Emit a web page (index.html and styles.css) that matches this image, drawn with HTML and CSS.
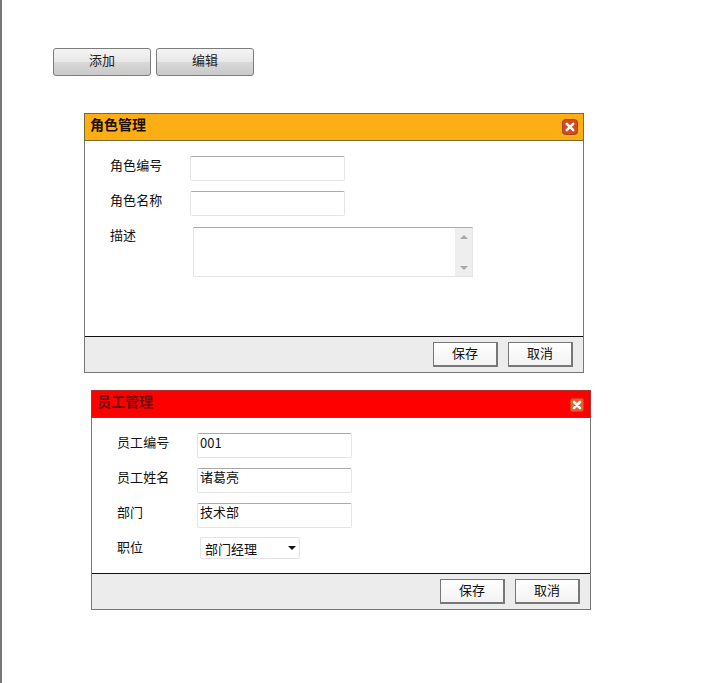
FILE: index.html
```html
<!DOCTYPE html>
<html lang="zh">
<head>
<meta charset="utf-8">
<title>角色管理</title>
<link rel="stylesheet" href="styles.css">
</head>
<body>
<main class="page">
  <div class="toolbar">
    <button class="tool-btn" type="button">添加</button>
    <button class="tool-btn" type="button">编辑</button>
  </div>

  <section class="dialog dialog-role">
    <header class="dialog-head head-orange">
      <h2 class="dialog-title">角色管理</h2>
      <span class="close" aria-label="关闭">
        <svg viewBox="0 0 16 16" width="16" height="16"><rect x="0.5" y="0.5" width="15" height="15" rx="3" fill="#d4491d" stroke="#a5411c"/><path d="M4.800 4.800l6.400 6.400M11.200 4.800l-6.400 6.400" stroke="#fff" stroke-width="2.600" stroke-linecap="round"/></svg>
      </span>
    </header>
    <div class="dialog-body">
      <div class="row"><span class="label">角色编号</span><span class="input"></span></div>
      <div class="row"><span class="label">角色名称</span><span class="input"></span></div>
      <div class="row row-top">
        <span class="label label-area">描述</span>
        <div class="textarea">
          <div class="scrollbar">
            <svg viewBox="0 0 8 4" width="8" height="4"><path d="M0 4l4-4 4 4z" fill="#a8a8a8"/></svg>
            <svg viewBox="0 0 8 4" width="8" height="4"><path d="M0 0l4 4 4-4z" fill="#a8a8a8"/></svg>
          </div>
        </div>
      </div>
    </div>
    <footer class="dialog-foot">
      <button class="foot-btn" type="button">保存</button>
      <button class="foot-btn" type="button">取消</button>
    </footer>
  </section>

  <section class="dialog dialog-staff">
    <header class="dialog-head head-red">
      <h2 class="dialog-title">员工管理</h2>
      <span class="close close-red" aria-label="关闭">
        <svg viewBox="0 0 14 14" width="14" height="14"><rect x="0.500" y="0.500" width="13" height="13" rx="2" fill="#e0632f" stroke="#d2401c"/><path d="M4 4l6 6M10 4l-6 6" stroke="#fff" stroke-width="2.500" stroke-linecap="round"/></svg>
      </span>
    </header>
    <div class="dialog-body">
      <div class="row"><span class="label">员工编号</span><span class="input">001</span></div>
      <div class="row"><span class="label">员工姓名</span><span class="input input-cjk">诸葛亮</span></div>
      <div class="row"><span class="label">部门</span><span class="input input-cjk">技术部</span></div>
      <div class="row row-select">
        <span class="label">职位</span>
        <span class="select">部门经理<svg viewBox="0 0 8 4" width="8" height="4"><path d="M0 0h8l-4 4z" fill="#111"/></svg></span>
      </div>
    </div>
    <footer class="dialog-foot">
      <button class="foot-btn" type="button">保存</button>
      <button class="foot-btn" type="button">取消</button>
    </footer>
  </section>
</main>
</body>
</html>
```

FILE: styles.css
```css
* { box-sizing: border-box; }

html, body { margin: 0; padding: 0; background: #fff; }

body {
  font-family: "Noto Sans CJK SC", "Liberation Sans", sans-serif;
  font-size: 13px;
  color: #111;
}

.page {
  min-height: 683px;
  border-left: 2px solid #777;
  padding: 48px 0 0 51px;
}

.toolbar { display: flex; gap: 5px; }

.tool-btn {
  width: 98px;
  height: 28px;
  padding: 0 0 6px;
  border: 1px solid #7c7c7c;
  border-radius: 3px;
  background: linear-gradient(#f4f4f4 0, #e8e8e8 48%, #d9d9d9 50%, #c9c9c9 100%);
  font: 13px "Noto Sans CJK SC", sans-serif;
  color: #222;
}

.dialog {
  width: 500px;
  display: flex;
  flex-direction: column;
  border: 1px solid #777;
  border-top: 0;
}

.dialog-role { margin: 37px 0 0 31px; height: 260px; }
.dialog-staff { margin: 17px 0 0 38px; height: 220px; }

.dialog-head {
  height: 28px;
  margin: 0 -1px;
  padding: 0 5px;
  display: flex;
  align-items: center;
  justify-content: space-between;
  border: 1px solid #7a6a35;
}

.head-orange { background: #fdae14; }
.head-red { background: #fe0000; border-color: #b03030; }

.dialog-title {
  margin: 0 0 6px;
  font-size: 14px;
  font-weight: 700;
  line-height: 1;
  color: #1a0f00;
}

.head-red .dialog-title { color: #6a1010; }

.close { display: flex; }
.close-red { margin: 2px 1px 0 0; }

.dialog-body {
  flex: 1;
  padding: 15px 0 0 25px;
  background: #fff;
}

.row {
  display: flex;
  align-items: center;
  margin-bottom: 10px;
  min-height: 25px;
}

.row-top { align-items: flex-start; margin-top: 11px; }

.label {
  width: 80px;
  line-height: 18px;
  padding-bottom: 7px;
  letter-spacing: 0.100px;
}

.label-area { width: 83px; margin-top: -1px; padding-bottom: 0; }

.input {
  width: 155px;
  height: 25px;
  padding: 0 2px;
  border: 1px solid #e4e4e4;
  border-top-color: #aaa;
  border-radius: 2px;
  line-height: 18px;
}

.input-cjk { line-height: 15px; }

.textarea {
  width: 280px;
  height: 50px;
  display: flex;
  justify-content: flex-end;
  border: 1px solid #e4e4e4;
  border-top-color: #aaa;
  border-radius: 1px;
}

.scrollbar {
  width: 17px;
  display: flex;
  flex-direction: column;
  align-items: center;
  justify-content: space-between;
  padding: 7px 0 6px;
  background: #eeeeee;
}

.row-select { margin-top: -1px; min-height: 22px; margin-bottom: 0; }
.row-select .label { width: 83px; line-height: 20px; padding-bottom: 2px; }

.select {
  width: 100px;
  height: 22px;
  padding: 0 3px 0 4px;
  display: flex;
  align-items: center;
  justify-content: space-between;
  border: 1px solid #e4e4e4;
  border-radius: 2px;
}

.dialog-foot {
  height: 36px;
  display: flex;
  justify-content: flex-end;
  gap: 10px;
  padding: 5px 10px 0 0;
  border-top: 1px solid #111;
  background: #ececec;
}

.foot-btn {
  width: 65px;
  height: 25px;
  padding: 0 0 4px;
  border: 2px solid #777;
  border-width: 1px 2px 2px 1px;
  background: linear-gradient(#fff, #f3f3f3);
  font: 13px "Noto Sans CJK SC", sans-serif;
  color: #111;
}
```
